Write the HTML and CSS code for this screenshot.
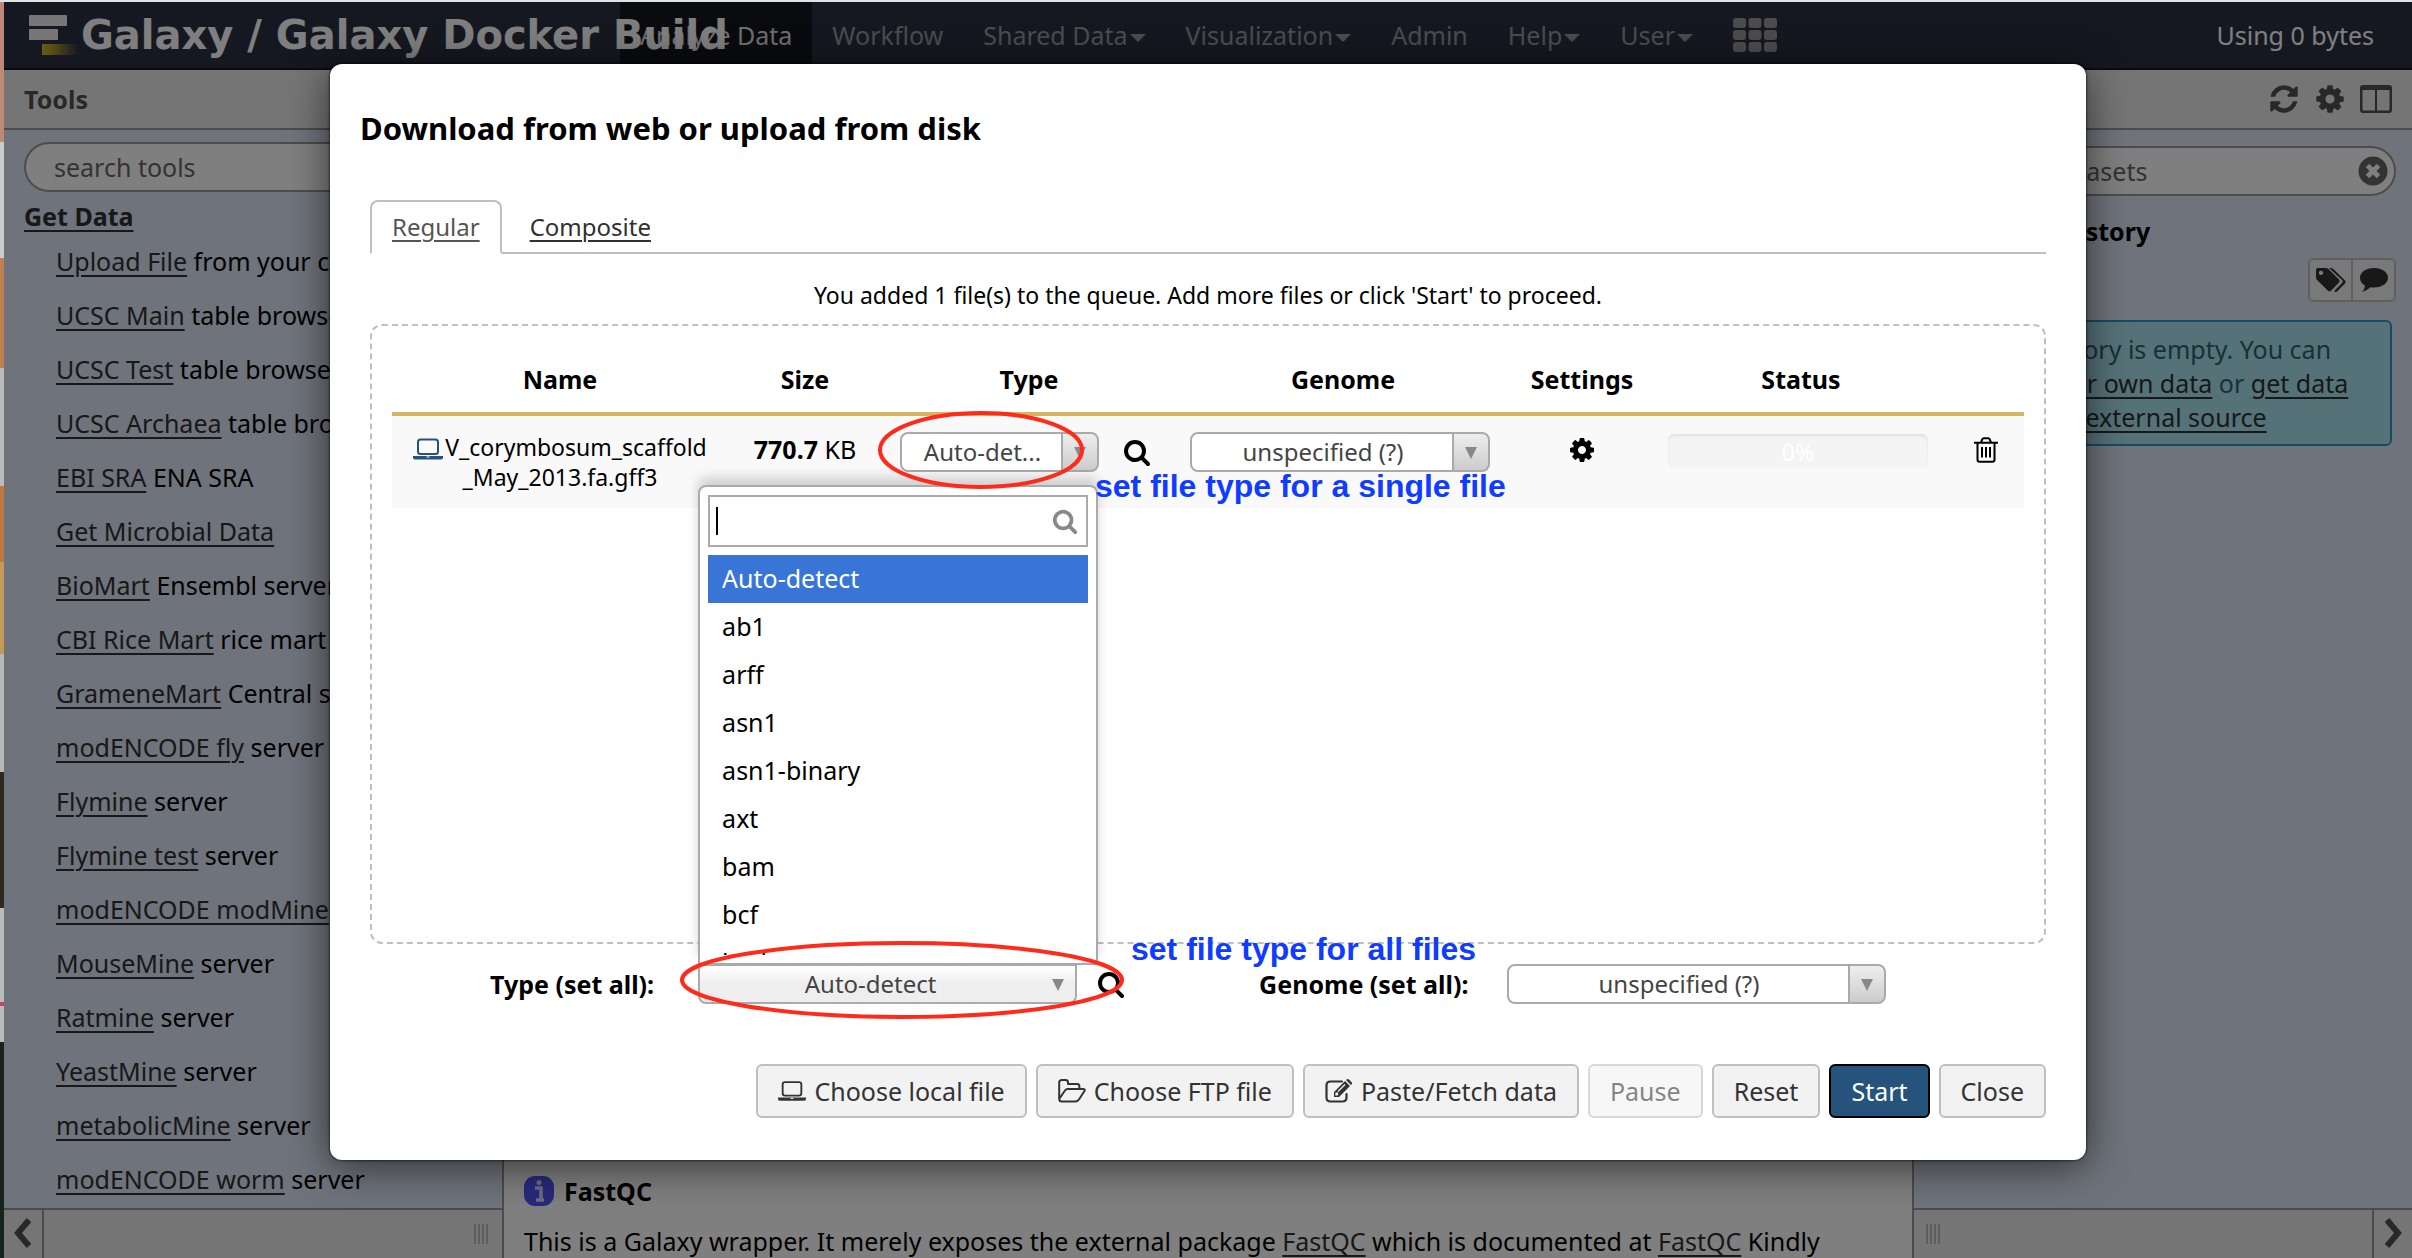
FILE: index.html
```html
<!DOCTYPE html>
<html lang="en">
<head>
<meta charset="utf-8">
<title>Galaxy / Galaxy Docker Build</title>
<link rel="stylesheet" href="styles.css">
</head>
<body>
<svg width="0" height="0" class="sprite" aria-hidden="true">
  <symbol id="i-gear" viewBox="0 0 1792 1792"><path d="M1152 896q0-106-75-181t-181-75-181 75-75 181 75 181 181 75 181-75 75-181zm512-109v222q0 12-8 23t-20 13l-185 28q-19 54-39 91 35 50 107 138 10 12 10 25t-9 23q-27 37-99 108t-94 71q-12 0-26-9l-138-108q-44 23-91 38-16 136-29 186-7 28-36 28h-222q-14 0-24.500-8.500t-11.500-21.500l-28-184q-49-16-90-37l-141 107q-10 9-25 9-14 0-25-11-126-114-165-168-7-10-7-23 0-12 8-23 15-21 51-66.500t54-70.500q-27-50-41-99l-183-27q-13-2-21-12.500t-8-23.500v-222q0-12 8-23t19-13l186-28q14-46 39-92-40-57-107-138-10-12-10-24 0-10 9-23 26-36 98.500-107.500t94.500-71.500q13 0 26 10l138 107q44-23 91-38 16-136 29-186 7-28 36-28h222q14 0 24.500 8.500t11.500 21.500l28 184q49 16 90 37l142-107q9-9 24-9 13 0 25 10 129 119 165 170 7 8 7 22 0 12-8 23-15 21-51 66.500t-54 70.500q26 50 41 98l183 28q13 2 21 12.500t8 23.500z"/></symbol>
  <symbol id="i-search" viewBox="0 0 1792 1792"><path d="M1216 832q0-185-131.500-316.500t-316.500-131.500-316.500 131.500-131.500 316.500 131.500 316.500 316.500 131.500 316.500-131.500 131.500-316.500zm512 832q0 52-38 90t-90 38q-54 0-90-38l-343-342q-179 124-399 124-143 0-273.500-55.500t-225-150-150-225-55.500-273.500 55.500-273.500 150-225 225-150 273.500-55.500 273.500 55.500 225 150 150 225 55.500 273.500q0 220-124 399l343 343q37 37 37 90z"/></symbol>
  <symbol id="i-refresh" viewBox="0 0 1792 1792"><path d="M1639 1056q0 5-1 7-64 268-268 434.500t-478 166.500q-146 0-282.500-55t-243.500-157l-129 129q-19 19-45 19t-45-19-19-45v-448q0-26 19-45t45-19h448q26 0 45 19t19 45-19 45l-137 137q71 66 161 102t187 36q134 0 250-65t186-179q11-17 53-117 8-23 30-23h192q13 0 22.500 9.500t9.500 22.500zm25-800v448q0 26-19 45t-45 19h-448q-26 0-45-19t-19-45 19-45l138-138q-148-137-349-137-134 0-250 65t-186 179q-11 17-53 117-8 23-30 23h-199q-13 0-22.500-9.500t-9.500-22.500v-7q65-268 270-434.500t480-166.500q146 0 284 55.500t245 156.500l130-129q19-19 45-19t45 19 19 45z"/></symbol>
  <symbol id="i-laptop" viewBox="0 0 30 22"><rect x="5" y="1.500" width="20" height="14.500" rx="2.500" fill="none" stroke="currentColor" stroke-width="2"/><path d="M0 18h30v1.500q0 2-3 2H3q-3 0-3-2z"/><path d="M13.500 19h3" stroke="#fff" stroke-width="1"/></symbol>
  <symbol id="i-folder" viewBox="0 0 28 24"><path d="M1.200 20V3.500Q1.200 1 3.700 1h4Q10 1 10 3.500V5h9q2.400 0 2.400 2.400V10M1.200 20l5.800-8.500Q8 10 9.500 10H25q2.600 0 1.300 2.300l-5 7.700Q19.800 22.500 17.500 22.500H3.700Q1.200 22.500 1.200 20z" fill="none" stroke="currentColor" stroke-width="2" stroke-linejoin="round"/></symbol>
  <symbol id="i-edit" viewBox="0 0 28 24"><path d="M17 2.500H5.500Q1.500 2.500 1.500 6.500v12q0 4 4 4h12q4 0 4-4V15" fill="none" stroke="currentColor" stroke-width="2.200" stroke-linecap="round"/><path d="M9 18v-5L20 2l5 5-11 11zM21 1l1-.7q1-.6 2 .3l2.600 2.600q1 1 .2 2L26 6z"/><path d="M11 16v-2l1.500 0v1.800zM13 12.500l7-7" stroke="#f2f2f2" stroke-width="1.200" fill="#f2f2f2"/></symbol>
  <symbol id="i-trash" viewBox="0 0 24 26"><path d="M3.500 6v16.500q0 2.300 2 2.300h13q2 0 2-2.300V6M0 5.800h24M7 5.500L8.300 2.200Q8.700 1.200 10 1.200h4q1.300 0 1.700 1L17 5.500M8 10v10.500M12 10v10.500M16 10v10.500" fill="none" stroke="currentColor" stroke-width="2"/></symbol>
  <symbol id="i-tags" viewBox="0 0 30 24"><path fill-rule="evenodd" d="M0 2Q0 0 2 0h7.500q1.800 0 3.200 1.300l10.300 10.200q1.300 1.500 0 3l-8 8.200q-1.500 1.300-3 0L1.300 12.300Q0 11 0 9.200zM5 2.700a2.200 2.200 0 1 0 .01 0z"/><path d="M13 0h1.800q1.500 0 3 1.500l11.200 11q1.200 1.500 0 3l-8 8q-1.600 1-3-.3l8.300-8.500q1-1.200 0-2.400z"/></symbol>
  <symbol id="i-comment" viewBox="0 0 28 24"><path d="M14 0c8 0 14 4.400 14 9.800s-6 9.800-14 9.800q-2 0-3.600-.3Q6.800 23 2 24q2.800-2.600 3-6.300Q0 14.800 0 9.800C0 4.400 6 0 14 0z"/></symbol>
  <symbol id="i-columns" viewBox="0 0 32 28"><path fill-rule="evenodd" d="M3 0h26q3 0 3 3v22q0 3-3 3H3q-3 0-3-3V3q0-3 3-3zM2.500 5v19.500q0 1 1 1H15V5zM17 5v20.500h11.500q1 0 1-1V5z"/></symbol>
</svg>

<div class="desktop" aria-hidden="true"></div>
<div class="app">
  <header class="masthead">
    <a class="brand" href="#">
      <svg class="brand-mark" viewBox="0 0 50 42" aria-hidden="true">
        <defs><linearGradient id="gold"><stop offset="0" stop-color="#d2b428"/><stop offset=".3" stop-color="#b09a2c"/><stop offset="1" stop-color="#2c3143"/></linearGradient></defs>
        <rect x="1" y="1" width="38" height="11" rx="1" fill="#eee"/><rect x="1" y="15" width="29" height="11" rx="1" fill="#eee"/><rect x="14" y="30" width="36" height="11" fill="url(#gold)"/>
      </svg>
      <span>Galaxy / Galaxy Docker Build</span>
    </a>
    <nav class="nav">
      <a class="active" href="#">Analyze Data</a>
      <a href="#">Workflow</a>
      <a class="has-menu" href="#">Shared Data</a>
      <a class="has-menu" href="#">Visualization</a>
      <a href="#">Admin</a>
      <a class="has-menu" href="#">Help</a>
      <a class="has-menu" href="#">User</a>
      <a href="#" aria-label="Apps"><svg width="44" height="34" viewBox="0 0 44 34"><g fill="currentColor"><rect width="13" height="10" rx="3"/><rect x="15.500" width="13" height="10" rx="3"/><rect x="31" width="13" height="10" rx="3"/><rect y="12" width="13" height="10" rx="3"/><rect x="15.500" y="12" width="13" height="10" rx="3"/><rect x="31" y="12" width="13" height="10" rx="3"/><rect y="24" width="13" height="10" rx="3"/><rect x="15.500" y="24" width="13" height="10" rx="3"/><rect x="31" y="24" width="13" height="10" rx="3"/></g></svg></a>
    </nav>
    <span class="quota">Using 0 bytes</span>
  </header>

  <div class="columns">
    <aside class="panel tools">
      <h2 class="panel-head">Tools</h2>
      <div class="panel-body">
        <input class="search" type="search" placeholder="search tools" aria-label="search tools">
        <a class="section" href="#">Get Data</a>
        <ul class="tool-list">
          <li><a href="#">Upload File</a> from your computer</li>
          <li><a href="#">UCSC Main</a> table browser</li>
          <li><a href="#">UCSC Test</a> table browser</li>
          <li><a href="#">UCSC Archaea</a> table browser</li>
          <li><a href="#">EBI SRA</a> ENA SRA</li>
          <li><a href="#">Get Microbial Data</a></li>
          <li><a href="#">BioMart</a> Ensembl server</li>
          <li><a href="#">CBI Rice Mart</a> rice mart</li>
          <li><a href="#">GrameneMart</a> Central server</li>
          <li><a href="#">modENCODE fly</a> server</li>
          <li><a href="#">Flymine</a> server</li>
          <li><a href="#">Flymine test</a> server</li>
          <li><a href="#">modENCODE modMine</a> server</li>
          <li><a href="#">MouseMine</a> server</li>
          <li><a href="#">Ratmine</a> server</li>
          <li><a href="#">YeastMine</a> server</li>
          <li><a href="#">metabolicMine</a> server</li>
          <li><a href="#">modENCODE worm</a> server</li>
        </ul>
      </div>
      <div class="panel-foot">
        <button class="fold" aria-label="Collapse tools"><svg width="18" height="30" viewBox="0 0 18 30"><path d="M15 2L4 15l11 13" fill="none" stroke="currentColor" stroke-width="6"/></svg></button>
        <span class="grip"></span>
      </div>
    </aside>

    <main class="center">
      <h3><svg width="30" height="30" viewBox="0 0 30 30" aria-hidden="true"><rect width="30" height="30" rx="11" fill="#5252f8"/><path d="M11 12h6v11M12 24h8" stroke="#dcdcff" stroke-width="3.500" fill="none"/><circle cx="15" cy="6.500" r="2.500" fill="#dcdcff"/></svg>FastQC</h3>
      <p>This is a Galaxy wrapper. It merely exposes the external package <a href="#">FastQC</a> which is documented at <a href="#">FastQC</a> Kindly</p>
    </main>

    <aside class="panel history">
      <div class="panel-head">
        <svg width="32" height="32"><use href="#i-refresh"/></svg>
        <svg width="32" height="32"><use href="#i-gear"/></svg>
        <svg width="32" height="28"><use href="#i-columns"/></svg>
      </div>
      <div class="panel-body">
        <div class="search-wrap">
          <input class="search" type="search" placeholder="search datasets" aria-label="search datasets">
          <svg class="clear" width="30" height="30" viewBox="0 0 30 30" aria-hidden="true"><circle cx="15" cy="15" r="14.500" fill="#666"/><path d="M9.500 9.500l11 11M20.500 9.500l-11 11" stroke="#fff" stroke-width="5"/></svg>
        </div>
        <h3>Unnamed history</h3>
        <div class="tag-buttons">
          <button aria-label="Edit tags"><svg width="30" height="24"><use href="#i-tags"/></svg></button>
          <button aria-label="Edit annotation"><svg width="28" height="24"><use href="#i-comment"/></svg></button>
        </div>
        <div class="notice">This history is empty. You can <a href="#">load your own data</a> or <a href="#">get data from an external source</a></div>
      </div>
      <div class="panel-foot">
        <span class="grip"></span>
        <button class="fold" aria-label="Collapse history"><svg width="18" height="30" viewBox="0 0 18 30"><path d="M3 2l11 13L3 28" fill="none" stroke="currentColor" stroke-width="6"/></svg></button>
      </div>
    </aside>
  </div>

  <div class="backdrop">
    <section class="modal" role="dialog" aria-labelledby="modal-title">
      <h1 id="modal-title">Download from web or upload from disk</h1>
      <div class="modal-body">
        <nav class="tabs"><a class="active" href="#">Regular</a><a href="#">Composite</a></nav>
        <p class="message">You added 1 file(s) to the queue. Add more files or click 'Start' to proceed.</p>
        <div class="drop-box">
          <table>
            <colgroup><col class="c-name"><col class="c-size"><col class="c-type"><col class="c-genome"><col class="c-settings"><col class="c-status"><col class="c-delete"></colgroup>
            <thead><tr><th>Name</th><th>Size</th><th>Type</th><th>Genome</th><th>Settings</th><th>Status</th><td></td></tr></thead>
            <tbody><tr>
              <td class="name"><svg width="30" height="22" class="local"><use href="#i-laptop"/></svg> V_corymbosum_scaffold<br>_May_2013.fa.gff3</td>
              <td class="size"><b>770.7</b> KB</td>
              <td class="type"><div class="controls">
                <span class="select narrow"><select aria-label="Type"><option>Auto-det...</option></select></span>
                <svg width="28" height="28"><use href="#i-search"/></svg>
              </div></td>
              <td class="genome"><div class="controls"><span class="select mid"><select aria-label="Genome"><option>unspecified (?)</option></select></span></div></td>
              <td class="mark"><svg width="28" height="28"><use href="#i-gear"/></svg></td>
              <td class="status"><div class="progress">0%</div></td>
              <td class="mark"><svg width="24" height="26"><use href="#i-trash"/></svg></td>
            </tr></tbody>
          </table>
        </div>
        <div class="set-all">
          <label for="type-all">Type (set all):</label>
          <span class="select wide open">
            <select id="type-all"><option>Auto-detect</option></select>
            <span class="dropdown">
              <span class="dropdown-search"><input type="text" aria-label="Filter types"><i class="caret"></i><svg width="28" height="28"><use href="#i-search"/></svg></span>
              <ul>
                <li class="selected">Auto-detect</li><li>ab1</li><li>arff</li><li>asn1</li><li>asn1-binary</li><li>axt</li><li>bam</li><li>bcf</li><li>bed</li>
              </ul>
            </span>
          </span>
          <svg class="type-info" width="28" height="28"><use href="#i-search"/></svg>
          <label class="genome-label" for="genome-all">Genome (set all):</label>
          <span class="select wide genome-all"><select id="genome-all"><option>unspecified (?)</option></select></span>
        </div>
        <div class="buttons">
          <button><svg width="28" height="22"><use href="#i-laptop"/></svg>Choose local file</button>
          <button><svg width="28" height="24"><use href="#i-folder"/></svg>Choose FTP file</button>
          <button><svg width="28" height="24"><use href="#i-edit"/></svg>Paste/Fetch data</button>
          <button disabled>Pause</button>
          <button>Reset</button>
          <button class="primary">Start</button>
          <button>Close</button>
        </div>
      </div>
      <svg class="ring ring-one" width="206" height="80" viewBox="0 0 206 80"><ellipse cx="103" cy="40" rx="101" ry="37"/></svg>
      <svg class="ring ring-all" width="446" height="80" viewBox="0 0 446 80"><ellipse cx="223" cy="40" rx="220" ry="37"/></svg>
      <span class="note note-one">set file type for a single file</span>
      <span class="note note-all">set file type for all files</span>
    </section>
  </div>
</div>
</body>
</html>
```
FILE: styles.css
```css
* { box-sizing: border-box; }

body {
  margin: 0;
  height: 100vh;
  display: flex;
  overflow: hidden;
  border-top: 2px solid #dfe3e4;
  font: 25px/34px "Noto Sans", "Open Sans", sans-serif;
  color: #000;
}

h1, h2, h3, p, ul { margin: 0; padding: 0; }
ul { list-style: none; }
a { color: #303030; text-decoration-thickness: 2px; text-underline-offset: 4px; }
button, input, select { font: inherit; color: inherit; }
svg { fill: currentColor; flex: none; }
.sprite { position: absolute; }

.desktop {
  flex: none;
  width: 4px;
  background: linear-gradient(#c08878 0 140px, #c9cccb 140px 256px, #c08050 256px 366px, #b9bcbb 366px 484px, #bd7a40 484px 560px, #c49a58 560px 652px, #b5b7b8 652px 770px, #2e2722 770px 906px, #b9bcbb 906px 1000px, #c9406a 1000px 1004px, #b9bcbb 1004px 1040px, #17241c 1040px);
}

.app { position: relative; flex: 1; min-width: 0; display: flex; flex-direction: column; }

/* Masthead */
.masthead {
  flex: none;
  display: flex;
  height: 68px;
  background: #2c3143;
  border-bottom: 2px solid #15171f;
}
.brand {
  position: relative;
  z-index: 1;
  flex: none;
  width: 616px;
  padding-left: 24px;
  display: flex;
  align-items: center;
  gap: 3px;
  color: #fff;
  font: bold 40px/60px "DejaVu Sans", sans-serif;
  white-space: nowrap;
  text-decoration: none;
}
.brand-mark { width: 50px; height: 42px; }
.nav { display: flex; flex: 1; }
.nav a { display: flex; align-items: center; padding: 0 20px; color: #999; text-decoration: none; }
.nav a.active { color: #ddd; background: #15171f; }
.has-menu::after { content: ""; margin: 6px 0 0 2px; border: 8px solid transparent; border-top: 8px solid; border-bottom: 0; }
.quota { align-self: center; padding-right: 38px; color: #fff; }

/* Side panels */
.columns { flex: 1; min-height: 0; display: flex; }
.panel { display: flex; flex-direction: column; background: #dee6f7; }
.tools { width: 500px; border-right: 2px solid #999; }
.history { width: 500px; border-left: 2px solid #999; }
.panel-head {
  flex: none;
  display: flex;
  align-items: center;
  height: 60px;
  padding: 0 20px;
  background: #ebebeb;
  border-bottom: 2px solid #999;
  color: #505050;
  font-size: 25px;
}
.history .panel-head { justify-content: flex-end; gap: 14px; }
.panel-body { flex: 1; min-height: 0; overflow: hidden; padding: 12px 20px 0; }
.history .panel-body { padding: 16px 16px 0 20px; }
.search {
  appearance: none;
  display: block;
  width: 100%;
  height: 50px;
  padding: 0 28px;
  border: 2px solid #999;
  border-radius: 25px;
  background: #fff;
  outline: 0;
}
.search::placeholder { color: #666; opacity: 1; }
.search-wrap { position: relative; }
.clear { position: absolute; top: 10px; right: 8px; }
.section { display: block; margin: 4px 0 8px; font-weight: bold; line-height: 40px; }
.tool-list { padding-left: 32px; }
.tool-list li { height: 54px; line-height: 34px; white-space: nowrap; }
.panel-foot {
  flex: none;
  display: flex;
  align-items: center;
  justify-content: space-between;
  height: 50px;
  background: #ebebeb;
  border-top: 2px solid #999;
}
.fold { align-self: stretch; width: 40px; padding: 4px 0 0; border: 0 solid #999; background: none; color: #505050; }
.tools .fold { border-right-width: 2px; }
.history .fold { border-left-width: 2px; }
.grip { width: 16px; height: 20px; margin: 0 12px; background: repeating-linear-gradient(90deg, #bbb 0 2px, #ebebeb 2px 4px); }
.history h3 { margin-top: 18px; font-size: 25px; line-height: 34px; }
.tag-buttons { display: flex; justify-content: flex-end; margin-top: 10px; }
.tag-buttons button {
  display: flex;
  align-items: center;
  justify-content: center;
  width: 45px;
  height: 44px;
  padding: 0;
  border: 2px solid #bfbfbf;
  background: #f2f2f2;
  color: #303030;
}
.tag-buttons button:first-child { border-radius: 6px 0 0 6px; margin-right: -2px; }
.tag-buttons button:last-child { border-radius: 0 6px 6px 0; }
.notice { margin: 18px 4px 0 0; padding: 10px 16px 10px 50px; border: 2px solid #2898c8; border-radius: 6px; background: #aae4f0; color: #2f626c; }

/* Tool help */
.center { flex: 1; min-width: 0; display: flex; flex-direction: column; justify-content: flex-end; gap: 16px; padding: 0 20px; background: #fff; }
.center h3 { display: flex; align-items: center; gap: 10px; font-size: 25px; line-height: 34px; }
.center p { white-space: nowrap; }

/* Upload dialog */
.backdrop { position: absolute; inset: 0; z-index: 2; padding: 62px 326px 0; background: rgba(0, 0, 0, .5); }
.modal { position: relative; padding: 44px 40px 42px; border-radius: 12px; background: #fff; box-shadow: 0 6px 40px rgba(0, 0, 0, .6), 0 0 3px #000; }
.modal h1 { margin-left: -10px; font-size: 31px; line-height: 40px; }
.tabs { display: flex; margin-top: 52px; height: 54px; border-bottom: 2px solid #bfbfbf; font-size: 24px; }
.tabs a { height: 54px; padding: 8px 20px; border: 2px solid transparent; }
.tabs a.active { margin-right: 6px; border-color: #bfbfbf; border-bottom-color: #fff; border-radius: 8px 8px 0 0; color: #555; }
.message { margin: 26px 0 14px; font-size: 23px; line-height: 30px; text-align: center; }
.drop-box { min-height: 620px; padding: 0 20px; border: 2px dashed #bfbfbf; border-radius: 12px; }

table { width: 100%; table-layout: fixed; border-collapse: separate; border-spacing: 0; }
.c-name { width: 336px; }
.c-size { width: 154px; }
.c-type { width: 294px; }
.c-genome { width: 334px; }
.c-settings { width: 144px; }
.c-status { width: 294px; }
.c-delete { width: 76px; }
thead th, thead td { padding: 36px 0 16px; border-bottom: 4px solid #d8b365; }
tbody td { height: 92px; padding: 16px 0 0; background: #f9f9f9; text-align: center; vertical-align: top; }
tbody .name { font-size: 23px; line-height: 30px; white-space: nowrap; }
.local { width: 30px; height: 22px; margin-right: -4px; color: #25537b; vertical-align: -4px; }
tbody .size { white-space: nowrap; }
tbody .type { padding-left: 18px; }
tbody .genome { padding-left: 14px; }
tbody .status { padding-left: 14px; padding-right: 20px; }
tbody .mark { padding-top: 20px; }
.controls { display: flex; align-items: center; gap: 24px; }
.progress { height: 34px; margin-top: 2px; border-radius: 6px; background: #f4f4f4; box-shadow: inset 0 2px 3px rgba(0, 0, 0, .08); color: #fff; font-size: 23px; line-height: 36px; }

.select { position: relative; display: block; height: 40px; }
.select select {
  appearance: none;
  display: block;
  width: 100%;
  height: 40px;
  padding: 0 34px 0 0;
  border: 2px solid #aaa;
  border-radius: 8px;
  background: linear-gradient(90deg, #aaa, #aaa) right 34px top / 2px 100% no-repeat, linear-gradient(#eee, #ccc) right / 34px 100% no-repeat, #fff;
  color: #444;
  font-size: 24px;
  line-height: 34px;
  text-align: center;
  text-align-last: center;
}
.select::after {
  content: "";
  position: absolute;
  top: 15px;
  right: 13px;
  border: 6px solid transparent;
  border-top: 12px solid #888;
  border-bottom: 0;
}
.narrow { width: 199px; }
.mid { width: 300px; }
.wide { width: 379px; }
.open select { border-radius: 0 0 8px 8px; background: linear-gradient(#fff, #eee 50%); }

.set-all { display: flex; align-items: center; margin: 20px 0 60px; padding-left: 120px; font-weight: bold; line-height: 34px; }
.set-all label { white-space: nowrap; }
.set-all .select { margin-left: 44px; font-weight: normal; }
.set-all .genome-all { margin-left: 38px; }
.type-info { margin-left: 20px; }
.genome-label { margin-left: 134px; }

.dropdown {
  position: absolute;
  left: 0;
  bottom: 39px;
  z-index: 1;
  width: 400px;
  padding: 8px;
  border: 2px solid #aaa;
  border-radius: 8px 8px 0 0;
  background: #fff;
  box-shadow: 0 -8px 12px rgba(0, 0, 0, .16);
}
.dropdown-search { position: relative; display: block; }
.dropdown-search input { display: block; width: 100%; height: 52px; border: 2px solid #aaa; outline: 0; }
.dropdown-search .caret { position: absolute; left: 8px; top: 12px; width: 2px; height: 28px; background: #000; }
.dropdown-search svg { position: absolute; right: 10px; top: 13px; width: 26px; height: 26px; color: #888; }
.dropdown ul { margin-top: 8px; height: 400px; overflow: hidden; }
.dropdown li { padding: 0 14px; height: 48px; line-height: 46px; }
.dropdown .selected { background: #3875d7; color: #fff; }

.buttons { display: flex; justify-content: flex-end; gap: 9px; }
.buttons button {
  display: flex;
  align-items: center;
  gap: 8px;
  height: 54px;
  padding: 0 20px;
  border: 2px solid #bfbfbf;
  border-radius: 6px;
  background: #f2f2f2;
  color: #333;
  white-space: nowrap;
}
.buttons button:disabled { opacity: .6; }
.buttons .primary { border-color: #000; background: #25537b; color: #fff; }

/* Annotations laid over the dialog */
.ring { position: absolute; z-index: 3; fill: none; stroke: #ff2a1a; stroke-width: 4px; }
.ring-one { left: 548px; top: 346px; }
.ring-all { left: 349px; top: 876px; }
.note { position: absolute; z-index: 3; color: #0f3cff; font: bold 32px/36px "Liberation Sans", sans-serif; white-space: nowrap; }
.note-one { left: 765px; top: 404px; }
.note-all { left: 801px; top: 867px; }
```
